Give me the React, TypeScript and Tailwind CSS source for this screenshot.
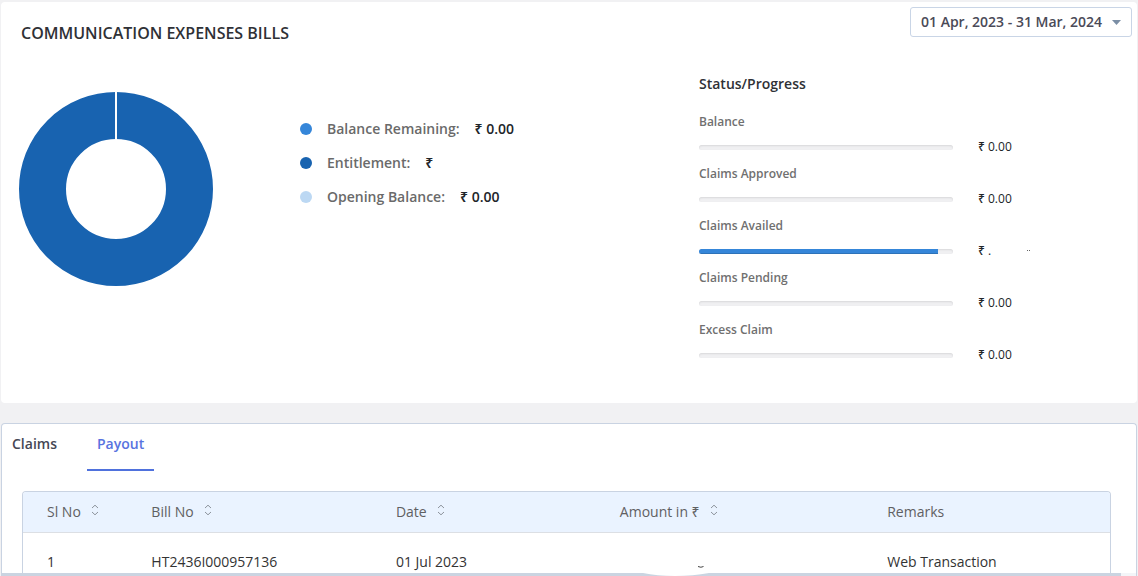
import React from "react";

type Progress = { label: string; amount: string; percent: number };

const legend = [
  { label: "Balance Remaining:", amount: "₹ 0.00", dot: "bg-[#3586d9]" },
  { label: "Entitlement:", amount: "₹", dot: "bg-[#1863b0]" },
  { label: "Opening Balance:", amount: "₹ 0.00", dot: "bg-[#bcd8f3]" },
];

const progress: Progress[] = [
  { label: "Balance", amount: "₹ 0.00", percent: 0 },
  { label: "Claims Approved", amount: "₹ 0.00", percent: 0 },
  { label: "Claims Availed", amount: "₹ .", percent: 94 },
  { label: "Claims Pending", amount: "₹ 0.00", percent: 0 },
  { label: "Excess Claim", amount: "₹ 0.00", percent: 0 },
];

function Donut() {
  return (
    <svg className="size-[194px]" viewBox="0 0 194 194" role="img" aria-label="Balance chart">
      <circle cx="97" cy="97" r="73.5" fill="none" stroke="#1863b0" strokeWidth="47" />
      <path d="M97 0V48" stroke="#fff" strokeWidth="2" />
    </svg>
  );
}

function SortIcon() {
  return (
    <svg className="h-3 w-2" viewBox="0 0 8 12" fill="none" stroke="#8d939c" strokeWidth="1" aria-hidden="true">
      <path d="M1 4 4 1.2 7 4M1 8 4 10.8 7 8" />
    </svg>
  );
}

function ProgressRow({ label, amount, percent }: Progress) {
  return (
    <li className="h-[52px]">
      <div className="text-xs leading-4 font-semibold text-[#707070]">{label}</div>
      <div className="mt-[9px] flex items-center gap-[25px]">
        <div
          role="progressbar"
          aria-label={label}
          aria-valuenow={percent}
          className="h-[5px] w-[58%] overflow-hidden rounded-sm bg-[#f0f0f2] shadow-[inset_0_1px_2px_rgba(0,0,0,0.1)]"
        >
          <div
            className="h-full bg-[#3586d9] shadow-[inset_0_-1px_0_rgba(0,0,0,0.15)]"
            style={{ width: `${percent}%` }}
          />
        </div>
        <span className="flex items-center text-xs leading-4 font-medium text-[#212529]">
          {amount}
          {percent > 0 && (
            <svg className="ml-9 h-1 w-1" viewBox="0 0 4 4" fill="#666" aria-hidden="true">
              <path d="M0 1h1v1H0zM2 1h1v1H2z" />
            </svg>
          )}
        </span>
      </div>
    </li>
  );
}

function HeaderCell({ text, sortable }: { text: string; sortable?: boolean }) {
  return (
    <th scope="col" className="h-[41px] border-b border-[#dcdfe4] pl-6 text-left font-normal text-[#5f6062]">
      {sortable ? (
        <button type="button" className="flex items-center gap-[10px]">
          {text}
          <span className="pb-1">
            <SortIcon />
          </span>
        </button>
      ) : (
        text
      )}
    </th>
  );
}

export default function App() {
  return (
    <div className="flex h-screen flex-col gap-5 overflow-hidden bg-[#f1f1f3] pt-0.5 font-['Open_Sans','Noto_Sans',sans-serif] text-sm text-[#212529]">
      <section className="mx-px shrink-0 rounded bg-white pb-[29px]">
        <header className="flex items-start justify-between pt-[5px] pr-[5px] pl-5">
          <h1 className="pt-[14px] text-base leading-6 font-semibold text-[#2f3136]">COMMUNICATION EXPENSES BILLS</h1>
          <div className="relative">
            <select
              aria-label="Period"
              className="h-[30px] w-[222px] appearance-none rounded-[3px] border border-[#c9d5e6] bg-white pr-7 pl-[10px] text-sm font-semibold text-[#4a4a57]"
            >
              <option>01 Apr, 2023 - 31 Mar, 2024</option>
            </select>
            <svg
              className="pointer-events-none absolute top-[13px] right-[11px] h-[5px] w-[9px]"
              viewBox="0 0 9 5"
              fill="#7b8ea5"
              aria-hidden="true"
            >
              <path d="M0 0h9L4.500 5z" />
            </svg>
          </div>
        </header>
        <div className="grid grid-cols-[299fr_399fr_438fr] pt-[29px]">
          <div className="pt-[18px] pl-[18px]">
            <Donut />
          </div>
          <ul className="pt-[38px]">
            {legend.map((item) => (
              <li key={item.label} className="flex h-[34px] items-center font-semibold">
                <span className={`mr-[15px] size-3 rounded-full ${item.dot}`} />
                <span className="mr-[15px] text-[#6a6a6a]">{item.label}</span>
                <span>{item.amount}</span>
              </li>
            ))}
          </ul>
          <div>
            <h2 className="mb-5 leading-5 font-semibold text-[#2f3136]">Status/Progress</h2>
            <ul>
              {progress.map((row) => (
                <ProgressRow key={row.label} {...row} />
              ))}
            </ul>
          </div>
        </div>
      </section>

      <section className="mx-px flex min-h-0 flex-1 flex-col overflow-hidden rounded-t border border-b-0 border-[#c9d3e2] bg-white">
        <nav className="flex shrink-0 gap-5" role="tablist">
          <button type="button" role="tab" aria-selected="false" className="h-[47px] px-[10px] pb-2 font-semibold text-[#454754]">
            Claims
          </button>
          <button
            type="button"
            role="tab"
            aria-selected="true"
            className="h-[47px] border-b-2 border-[#4f71dd] px-[10px] pb-[6px] font-semibold text-[#5873e0]"
          >
            Payout
          </button>
        </nav>
        <div className="min-h-0 flex-1 overflow-hidden pt-5 pr-[25px] pl-5">
          <div className="overflow-hidden rounded-t border border-b-0 border-[#c9d3e2]">
            <table className="w-full table-fixed border-separate border-spacing-0">
              <colgroup>
                <col className="w-[9.6%]" />
                <col className="w-[22.5%]" />
                <col className="w-[20.6%]" />
                <col className="w-[24.6%]" />
                <col />
              </colgroup>
              <thead className="bg-[#eaf3ff]">
                <tr>
                  <HeaderCell text="Sl No" sortable />
                  <HeaderCell text="Bill No" sortable />
                  <HeaderCell text="Date" sortable />
                  <HeaderCell text="Amount in ₹" sortable />
                  <HeaderCell text="Remarks" />
                </tr>
              </thead>
              <tbody>
                <tr className="h-[58px] text-[#333]">
                  <td className="pl-6">1</td>
                  <td className="pl-6">HT2436I000957136</td>
                  <td className="pl-6">01 Jul 2023</td>
                  <td className="pl-[102px]">
                    <svg className="mt-2 h-1 w-[6px]" viewBox="0 0 6 4" fill="none" stroke="#444" aria-hidden="true">
                      <path d="M0 2.500Q3 4 5.500 2.500" />
                    </svg>
                  </td>
                  <td className="pl-6">Web Transaction</td>
                </tr>
              </tbody>
            </table>
          </div>
        </div>
        <div className="relative h-[3px] shrink-0 bg-[#f3f5f8] pr-[15px]">
          <div className="h-full bg-[#cad4e1]" />
          <svg className="absolute bottom-0 left-[56%] h-[3px] w-[72px]" viewBox="0 0 72 3" fill="#fff" aria-hidden="true">
            <path d="M6 0H72Q56 3 38 3Q20 3 6 0Z" />
          </svg>
        </div>
      </section>
    </div>
  );
}
